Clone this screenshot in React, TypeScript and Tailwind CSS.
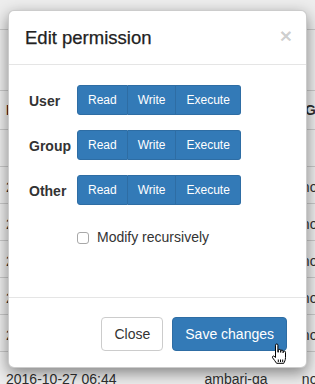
import React from "react";

const rows = [
  { h: "h-[61px]" },
  { h: "h-[39px]", head: true },
  { h: "h-[37px]" },
  { h: "h-[37px]", data: true },
  { h: "h-[37px]", data: true },
  { h: "h-[37px]", data: true },
  { h: "h-[37px]", data: true },
  { h: "h-[37px]", data: true },
  { h: "h-[37px]", data: true, last: true },
];

function PermGroup({ label }: { label: string }) {
  return (
    <div className="flex items-center">
      <div className="w-[48px] pt-[3px] text-[14px] font-bold text-[#333]">{label}</div>
      <div className="flex h-[30px] text-[12px] text-white">
        <button className="px-[10px] bg-[#337ab7] border border-[#2e6da4] rounded-l-[3px]">Read</button>
        <button className="px-[10px] bg-[#337ab7] border border-l-0 border-[#2e6da4]">Write</button>
        <button className="px-[10px] bg-[#337ab7] border border-l-0 border-[#2e6da4] rounded-r-[3px]">Execute</button>
      </div>
    </div>
  );
}

function HandCursor() {
  return (
    <svg width="17" height="23" viewBox="0 0 17 23" className="absolute left-[271px] top-[343px]">
      <path
        d="M4.5 2.2a1.2 1.2 0 0 1 2.4 0v7h.4V7.6a1.2 1.2 0 0 1 2.4 0v1.8V8.3a1.2 1.2 0 0 1 2.4 0v1.5V9.3a1.2 1.2 0 0 1 2.4 0v5.2c0 2.8-1.2 4.4-1.7 5.8H5.6c-1-1.6-2.8-3.8-4-5.5-.7-1 .4-2.3 1.4-1.6l1.5 1.3z"
        fill="white"
        stroke="black"
        strokeWidth="1"
        strokeLinejoin="round"
      />
      <path d="M7.3 16.5v2.5M9.5 16.5v2.5M11.7 16.5v2.5" stroke="black" strokeWidth="1" />
    </svg>
  );
}

export default function App() {
  return (
    <div className="relative w-[315px] h-[384px] overflow-hidden bg-white font-['Liberation_Sans',Arial,sans-serif]">
      <div className="flex flex-col pt-[29px]">
        {rows.map((r, i) => (
          <div key={i} className={`${r.h} relative flex items-center border-t border-[#d9d9d9] text-[14px] text-[#333] whitespace-nowrap`}>
            {r.head && (
              <>
                <span className="ml-[6px] font-bold text-[#5a2a1a]">I</span>
                <span className="ml-auto mr-[-32px] font-bold">Group</span>
              </>
            )}
            {r.data && (
              <>
                <span className={`ml-[6px] ${r.last ? "pt-[18px]" : "pt-[4px]"}`}>2016-10-27 06:44</span>
                {r.last && <span className="ml-[88px] pt-[18px]">ambari-qa</span>}
                <span className={`ml-auto mr-[-18px] ${r.last ? "pt-[18px]" : "pt-[4px]"}`}>none</span>
              </>
            )}
          </div>
        ))}
      </div>

      <div className="absolute inset-0 bg-black/[0.07]" />

      <div className="absolute left-[8px] top-[10px] w-[299px] bg-white border border-black/20 rounded-[6px] shadow-[0_5px_15px_rgba(0,0,0,0.45)]">
        <div className="h-[54px] flex items-center pl-[16px] pr-[14px] border-b border-[#e5e5e5]">
          <h4 className="text-[18.5px] text-[#222] leading-none pt-[1px] [-webkit-text-stroke:0.25px_#222]">Edit permission</h4>
          <span className="ml-auto text-[21px] font-bold leading-none text-black/20 pb-[4px]">×</span>
        </div>
        <div className="h-[232px] pl-[20px] pt-[20px] flex flex-col gap-[15px]">
          <PermGroup label="User" />
          <PermGroup label="Group" />
          <PermGroup label="Other" />
          <div className="flex items-center ml-[48px] mt-[7px] gap-[8px]">
            <span className="w-[12px] h-[12px] border border-[#a8a8a8] rounded-[3px] bg-white" />
            <span className="text-[14px] text-[#333]">Modify recursively</span>
          </div>
        </div>
        <div className="h-[70px] flex items-start justify-end gap-[9px] pt-[19px] pr-[19px] border-t border-[#e5e5e5]">
          <button className="h-[34px] px-[12px] text-[14px] text-[#333] bg-white border border-[#ccc] rounded-[4px]">Close</button>
          <button className="h-[34px] px-[12px] text-[14px] text-white bg-[#337ab7] border border-[#2e6da4] rounded-[4px]">Save changes</button>
        </div>
      </div>

      <HandCursor />
    </div>
  );
}
